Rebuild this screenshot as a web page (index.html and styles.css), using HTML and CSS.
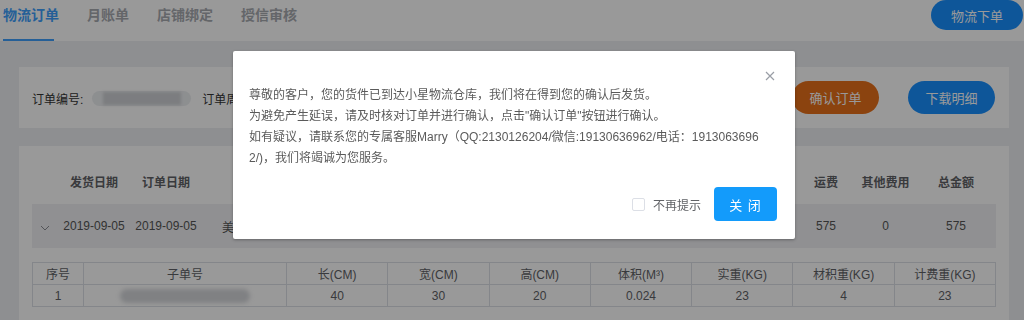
FILE: index.html
```html
<!DOCTYPE html>
<html lang="zh-CN">
<head>
  <meta charset="UTF-8">
  <title>物流订单</title>
  <link rel="stylesheet" href="styles.css">
</head>
<body>

  <div class="topbar">
    <div class="tabs">
      <div class="tab active">物流订单</div>
      <div class="tab">月账单</div>
      <div class="tab">店铺绑定</div>
      <div class="tab">授信审核</div>
    </div>
    <button class="btn btn-blue btn-top">物流下单</button>
  </div>

  <div class="page">
    <div class="card search-card">
      <div class="search-fields">
        <span class="field-label">订单编号:</span>
        <span class="masked-input"><span class="masked-text"></span></span>
        <span class="field-label">订单周期:</span>
      </div>
      <div class="search-actions">
        <button class="btn btn-orange">确认订单</button>
        <button class="btn btn-blue">下载明细</button>
      </div>
    </div>

    <div class="card order-card">
      <div class="order-grid order-head">
        <span></span>
        <span>发货日期</span>
        <span>订单日期</span>
        <span>目的地</span>
        <span>运费</span>
        <span>其他费用</span>
        <span>总金额</span>
      </div>

      <div class="order-grid order-row">
        <span class="chevron">
          <svg width="10" height="6" viewBox="0 0 10 6"><polyline points="1,1 5,5 9,1" fill="none" stroke="#8a8d93" stroke-width="1"/></svg>
        </span>
        <span>2019-09-05</span>
        <span>2019-09-05</span>
        <span class="left">美国</span>
        <span>575</span>
        <span>0</span>
        <span>575</span>
      </div>

      <table class="sub-table">
        <colgroup>
          <col class="c-no">
          <col class="c-sub">
          <col span="7">
        </colgroup>
        <tr>
          <th>序号</th>
          <th>子单号</th>
          <th>长(CM)</th>
          <th>宽(CM)</th>
          <th>高(CM)</th>
          <th>体积(M³)</th>
          <th>实重(KG)</th>
          <th>材积重(KG)</th>
          <th>计费重(KG)</th>
        </tr>
        <tr>
          <td>1</td>
          <td><span class="masked-sub"></span></td>
          <td>40</td>
          <td>30</td>
          <td>20</td>
          <td>0.024</td>
          <td>23</td>
          <td>4</td>
          <td>23</td>
        </tr>
      </table>
    </div>
  </div>

  <div class="overlay"></div>

  <div class="dialog">
    <span class="dialog-close">
      <svg width="10" height="10" viewBox="0 0 10 10"><path d="M1 1 L9 9 M9 1 L1 9" stroke="#9a9ea6" stroke-width="1.2" fill="none"/></svg>
    </span>
    <div class="dialog-body">
      <p>尊敬的客户，您的货件已到达小星物流仓库，我们将在得到您的确认后发货。</p>
      <p>为避免产生延误，请及时核对订单并进行确认，点击"确认订单"按钮进行确认。</p>
      <p>如有疑议，请联系您的专属客服Marry（QQ:2130126204/微信:19130636962/电话：19130636962/)，我们将竭诚为您服务。</p>
    </div>
    <div class="dialog-footer">
      <label class="check"><span class="check-box"></span>不再提示</label>
      <button class="btn-close">关 闭</button>
    </div>
  </div>

</body>
</html>
```

FILE: styles.css
```css
body {
  font-family: 'Liberation Sans', 'Noto Sans CJK SC', sans-serif;
  background-color: #edeef2;
  margin: 0;
  padding: 0;
  color: #606266;
  font-size: 12px;
  overflow: hidden;
}

button {
  font-family: inherit;
  border: none;
  cursor: pointer;
}

.topbar {
  height: 41px;
  background: white;
  display: flex;
  justify-content: space-between;
  align-items: flex-start;
}

.tabs {
  display: flex;
  padding-left: 3px;
  gap: 28px;
}

.tab {
  height: 41px;
  box-sizing: border-box;
  padding-top: 5px;
  line-height: 20px;
  font-size: 14px;
  font-weight: bold;
  color: #a7aab0;
  position: relative;
}

.tab.active {
  color: #3f9ffc;
}

.tab.active::after {
  content: '';
  position: absolute;
  left: 0;
  bottom: 0;
  width: 51px;
  height: 2px;
  background: #3f9ffc;
}

.btn {
  color: white;
  font-size: 13px;
  border-radius: 17px;
  height: 33px;
  padding: 0;
}

.btn-blue {
  background-color: #1890ff;
}

.btn-orange {
  background-color: #e8701a;
}

.btn-top {
  width: 92px;
  height: 30px;
  border-radius: 15px;
  margin-right: 1px;
}

.page {
  padding: 26px 15px 0 19px;
  display: flex;
  flex-direction: column;
  gap: 18px;
}

.card {
  background: white;
}

.search-card {
  height: 61px;
  display: flex;
  justify-content: space-between;
  align-items: center;
  padding: 0 14px 0 13px;
}

.search-fields {
  display: flex;
  align-items: center;
  gap: 9px;
  margin-top: 2px;
}

.field-label {
  color: #333;
  font-size: 12px;
}

.masked-input {
  width: 99px;
  height: 15px;
  border-radius: 8px;
  background: #eceef1;
  display: flex;
  align-items: center;
  justify-content: center;
  margin-right: 2px;
}

.masked-text {
  width: 78px;
  height: 13px;
  background: #cfd1d5;
  filter: blur(1.5px);
}

.search-actions {
  display: flex;
  gap: 29px;
}

.search-actions .btn {
  width: 87px;
}

.order-card {
  padding: 23px 13px 14px 13px;
}

.order-grid {
  display: grid;
  grid-template-columns: 26px 72px 72px 1fr 58px 61px 80px;
  text-align: center;
  align-items: center;
}

.order-grid .left {
  text-align: left;
  padding-left: 20px;
}

.order-head {
  height: 24px;
  font-weight: bold;
  color: #606266;
  margin-bottom: 11px;
}

.order-row {
  height: 44px;
  background: #f0f1f4;
  color: #555;
  margin-bottom: 14px;
}

.chevron {
  display: flex;
  justify-content: center;
  padding-top: 3px;
}

.sub-table {
  width: 100%;
  border-collapse: collapse;
  table-layout: fixed;
}

.c-no {
  width: 51px;
}

.c-sub {
  width: 203px;
}

.sub-table th, .sub-table td {
  border: 1px solid #dcdfe6;
  height: 21px;
  padding: 0;
  font-weight: normal;
  text-align: center;
  color: #606266;
  font-size: 12px;
}

.masked-sub {
  display: inline-block;
  width: 130px;
  height: 14px;
  margin-top: 4px;
  background: #d5d7db;
  border-radius: 7px;
  filter: blur(2px);
}

.overlay {
  position: fixed;
  inset: 0;
  background: rgba(0, 0, 0, 0.4);
}

.dialog {
  position: fixed;
  left: 233px;
  top: 51px;
  width: 562px;
  box-sizing: border-box;
  background: white;
  border-radius: 2px;
  box-shadow: 0 1px 3px rgba(0, 0, 0, 0.3);
  padding: 34px 18px 18px 16px;
}

.dialog-close {
  position: absolute;
  top: 20px;
  right: 20px;
  line-height: 0;
}

.dialog-body p {
  margin: 0;
  line-height: 21px;
  font-size: 12px;
  color: #5a5a5a;
  word-break: break-all;
}

.dialog-footer {
  display: flex;
  justify-content: flex-end;
  align-items: center;
  margin-top: 18px;
}

.check {
  display: flex;
  align-items: center;
  gap: 8px;
  font-size: 12px;
  color: #606266;
  margin-right: 13px;
}

.check-box {
  width: 11px;
  height: 11px;
  border: 1px solid #dcdfe6;
  border-radius: 2px;
}

.btn-close {
  width: 63px;
  height: 34px;
  background: #139bfb;
  color: white;
  font-size: 13px;
  border-radius: 4px;
  letter-spacing: 1px;
}
```
